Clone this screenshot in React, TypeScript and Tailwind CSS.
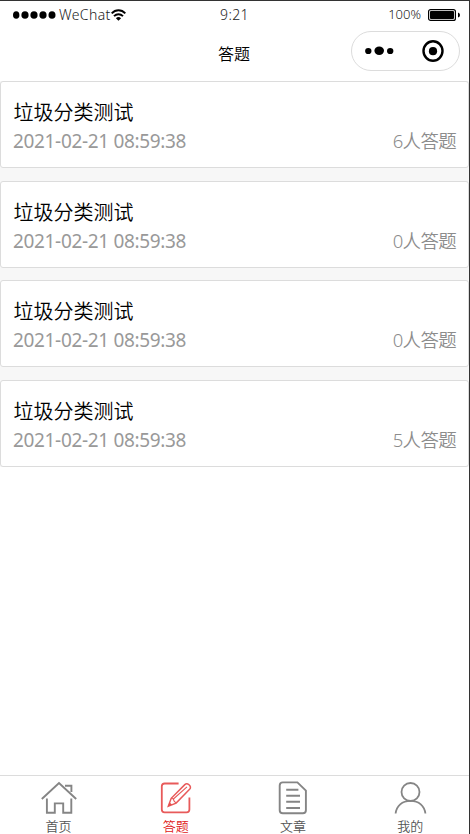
import React from 'react';

interface Quiz {
  id: number;
  title: string;
  createdAt: string;
  count: number;
}

const quizzes: Quiz[] = [
  { id: 1, title: '垃圾分类测试', createdAt: '2021-02-21 08:59:38', count: 6 },
  { id: 2, title: '垃圾分类测试', createdAt: '2021-02-21 08:59:38', count: 0 },
  { id: 3, title: '垃圾分类测试', createdAt: '2021-02-21 08:59:38', count: 0 },
  { id: 4, title: '垃圾分类测试', createdAt: '2021-02-21 08:59:38', count: 5 },
];

const SignalDots = () => (
  <svg width="43" height="8" viewBox="0 0 43 8" fill="#000">
    <ellipse cx="3.2" cy="4" rx="3.2" ry="3.8" />
    <ellipse cx="12" cy="4" rx="3.6" ry="3.8" />
    <ellipse cx="21" cy="4" rx="3.6" ry="3.8" />
    <ellipse cx="30" cy="4" rx="3.6" ry="3.8" />
    <ellipse cx="39" cy="4" rx="3.5" ry="3.8" />
  </svg>
);

const WifiIcon = () => (
  <svg width="15" height="12" viewBox="0 0 15 12" fill="none" stroke="#000" strokeWidth="1.9">
    <path d="M0.7 4.4C4.6 0.2 10.4 0.2 14.3 4.4" />
    <path d="M3 7.2C5.6 4.6 9.4 4.6 12 7.2" />
    <path d="M4.9 9.2Q7.5 7 10.1 9.2L7.5 11.7Z" fill="#000" stroke="none" />
  </svg>
);

const BatteryIcon = () => (
  <svg width="33" height="12" viewBox="0 0 33 12">
    <rect x="0.6" y="0.6" width="26.8" height="10.8" rx="2" fill="none" stroke="#000" strokeWidth="1.2" />
    <rect x="2" y="2" width="24" height="8" rx="1" fill="#000" />
    <path d="M30 3.5Q32 4 32 6Q32 8 30 8.5Z" fill="#000" />
  </svg>
);

const Capsule = () => (
  <div className="flex h-[40px] w-[109px] items-center justify-between rounded-full border border-[#dcdcdc] pl-[13px] pr-[15px]">
    <svg width="29" height="10" viewBox="0 0 29 10" fill="#000">
      <ellipse cx="3.3" cy="5" rx="3.2" ry="3.1" />
      <ellipse cx="14.2" cy="4.8" rx="4.8" ry="4.2" />
      <ellipse cx="25.2" cy="5" rx="3.2" ry="3.1" />
    </svg>
    <svg width="22" height="22" viewBox="0 0 22 22">
      <ellipse cx="11" cy="11" rx="9.5" ry="9.8" fill="none" stroke="#000" strokeWidth="2.4" />
      <circle cx="11" cy="11.2" r="4.1" fill="#000" />
    </svg>
  </div>
);

const HomeIcon = () => (
  <svg width="36" height="34" viewBox="0 0 36 34" fill="none" stroke="#858585" strokeWidth="1.9">
    <path d="M0.8 18L18 2L35.2 18" />
    <path d="M5.9 17.5V31.8H13.8V22.4H22.2V31.8H30.3V17.5" />
    <path d="M24 4.8H30.4V11" />
  </svg>
);

const EditIcon = () => (
  <svg width="36" height="34" viewBox="0 0 36 34" fill="none" stroke="#e85a5a" strokeWidth="1.8">
    <path d="M20.6 2.5H6.6Q3.8 2.5 3.8 5.3V28.6Q3.8 31.4 6.6 31.4H28.6Q31.4 31.4 31.4 28.6V16.5" />
    <path d="M10.3 25.2L13.2 17.3L26.8 3.6Q28.7 1.8 31 3.8Q33.6 6.1 31.6 8.3L18.1 22.1Z" strokeWidth="1.5" />
    <path d="M13.2 17.3L15.4 18L16 20L18.1 22.1M15.4 18L29 5.8" strokeWidth="1.1" />
    <path d="M10 25.6L11.5 21.5L14.2 23.6Z" fill="#e64f4f" stroke="none" />
  </svg>
);

const ArticleIcon = () => (
  <svg width="36" height="34" viewBox="0 0 36 34" fill="none" stroke="#858585" strokeWidth="1.9">
    <path d="M7.8 1.4H22.4L30.9 9.6V29.3Q30.9 32.3 27.9 32.3H7.8Q4.7 32.3 4.7 29.3V4.4Q4.7 1.4 7.8 1.4Z" />
    <path d="M11.2 8.7H23.4M11.2 14.7H25M11.2 20.8H25M11.2 27H25" />
  </svg>
);

const UserIcon = () => (
  <svg width="36" height="34" viewBox="0 0 36 34" fill="none" stroke="#858585" strokeWidth="1.8">
    <circle cx="18.5" cy="11" r="9" />
    <path d="M3.6 32.5C4.5 25 10 19.9 18.5 19.9C27 19.9 32.5 25 33.4 32.5" />
  </svg>
);

const tabs = [
  { label: '首页', icon: HomeIcon, active: false },
  { label: '答题', icon: EditIcon, active: true },
  { label: '文章', icon: ArticleIcon, active: false },
  { label: '我的', icon: UserIcon, active: false },
];

const QuizCard = ({ quiz }: { quiz: Quiz }) => (
  <li className="h-[87px] shrink-0 rounded-[3px] border border-[#dcdcdc] bg-white px-3 pt-4">
    <h2 className="pl-[0.5px] text-[20px] font-[350] leading-[29px] text-black">{quiz.title}</h2>
    <div className="flex justify-between text-[19px] leading-[29px] text-[#999]">
      <time className="tracking-[-0.34px]">{quiz.createdAt}</time>
      <span className="text-[18.5px] font-[350] leading-[28px] tracking-[-0.7px] text-[#8c8c8c]">{quiz.count}人答题</span>
    </div>
  </li>
);

export default function App() {
  return (
    <div className="flex h-[834px] w-[470px] flex-col overflow-hidden border-t border-r border-[#333] bg-white font-['Noto_Sans','Noto_Sans_CJK_SC',sans-serif]">
      <header className="h-[80px] shrink-0">
        <div className="grid h-[28px] grid-cols-3 items-center text-[14px] text-[#222]">
          <div className="flex items-center pl-[13px]">
            <SignalDots />
            <span className="relative -top-px ml-[3px] font-light tracking-[0.4px]">WeChat</span>
            <WifiIcon />
          </div>
          <span className="relative -top-px text-center font-light tracking-[0.4px]">9:21</span>
          <div className="flex items-center justify-end pr-[8px]">
            <span className="mr-[7px] text-[13px] font-light">100%</span>
            <BatteryIcon />
          </div>
        </div>
        <div className="grid grid-cols-[1fr_auto_1fr] items-start pt-[2px] pr-[9px]">
          <span />
          <h1 className="pl-[8px] pt-[11px] text-[16px] font-[350] leading-[24px] text-black">答题</h1>
          <div className="flex justify-end">
            <Capsule />
          </div>
        </div>
      </header>

      <main className="min-h-0 flex-1">
        <ul className="flex flex-col gap-[12.5px] bg-[#f7f7f7]">
          {quizzes.map((quiz) => (
            <QuizCard key={quiz.id} quiz={quiz} />
          ))}
        </ul>
      </main>

      <nav className="grid h-[59px] shrink-0 grid-cols-4 border-t border-[#dcdcdc]">
        {tabs.map(({ label, icon: Icon, active }) => (
          <div key={label} className="flex flex-col items-center pt-[5px]">
            <Icon />
            <span className={`text-[13px] font-[350] leading-[22px] ${active ? 'text-[#e02020]' : 'text-[#555]'}`}>{label}</span>
          </div>
        ))}
      </nav>
    </div>
  );
}
